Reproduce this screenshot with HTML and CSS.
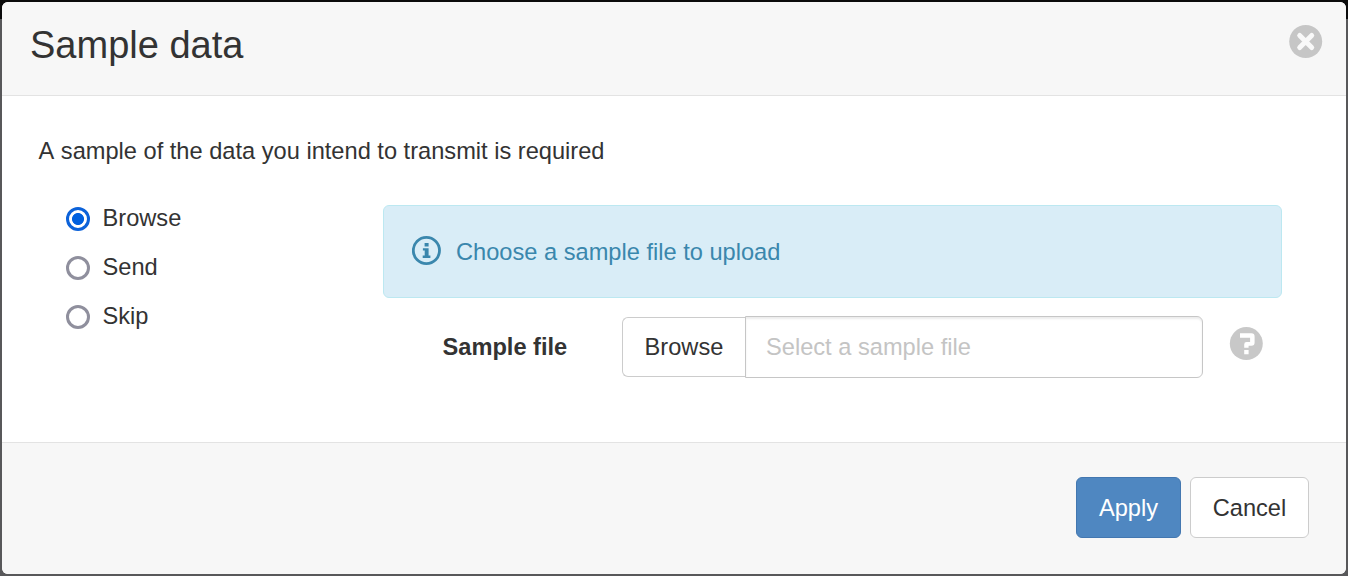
FILE: index.html
```html
<!DOCTYPE html>
<html lang="en">
<head>
<meta charset="utf-8">
<title>Sample data</title>
<link rel="stylesheet" href="styles.css">
</head>
<body>
<div class="modal">
  <header class="modal-header">
    <h1 class="title">Sample data</h1>
    <svg class="close" viewBox="0 0 34 34" role="img" aria-label="Close"><circle cx="16.7" cy="16.5" r="16.5" fill="#c6c6c6"/><path d="M10.7 10.5L22.7 22.5M22.7 10.5L10.7 22.5" stroke="#f9f9f9" stroke-width="5" stroke-linecap="round"/></svg>
  </header>
  <main class="modal-body">
    <p class="intro">A sample of the data you intend to transmit is required</p>
    <div class="columns">
      <div class="options">
        <label class="option"><input class="radio" type="radio" name="source" checked>Browse</label>
        <label class="option"><input class="radio" type="radio" name="source">Send</label>
        <label class="option"><input class="radio" type="radio" name="source">Skip</label>
      </div>
      <div class="panel">
        <div class="alert">
          <svg class="info" viewBox="0 0 30 30"><circle cx="14.4" cy="14.5" r="13.1" fill="none" stroke="#3a87ad" stroke-width="2.8"/><path fill="#3a87ad" d="M12.6 7h4v3.5h-4zM10.9 12.2h5.7v7.4h1.8v2.3h-7.7v-2.3h2v-5.1h-1.8z"/></svg>
          <span>Choose a sample file to upload</span>
        </div>
        <div class="file-row">
          <label class="file-label" for="file">Sample file</label>
          <button class="browse" type="button">Browse</button>
          <input class="file-input" id="file" type="text" placeholder="Select a sample file">
          <svg class="help" viewBox="0 0 34 34"><circle cx="17.3" cy="16.6" r="16.5" fill="#c8c8c8"/><path fill="#fff" d="M11 6.2h11.4q3.2 0 3.2 3.2v6.2q0 3.2-3.2 3.2H19.6v1.9h-4.4v-3.3q0-2.4 2.4-2.4h3.5V10.7H11zM15.2 22.9h4.4v4.3h-4.4z"/></svg>
        </div>
      </div>
    </div>
  </main>
  <footer class="modal-footer">
    <button class="btn primary" type="button">Apply</button>
    <button class="btn" type="button">Cancel</button>
  </footer>
</div>
</body>
</html>
```
FILE: styles.css
```css
* { box-sizing: border-box; }
body {
  margin: 0;
  height: 576px;
  padding: 2px;
  overflow: hidden;
  background: linear-gradient(#0b0b0b 19px, #58585a 19px);
  font-family: "Liberation Sans", Arial, sans-serif;
  font-size: 23.63px;
  line-height: 34px;
  color: #333;
}
button, input { font: inherit; color: inherit; }
.modal {
  height: 572px;
  display: flex;
  flex-direction: column;
  background: #fff;
  border-radius: 6px;
  overflow: hidden;
}
.modal-header {
  height: 94px;
  display: flex;
  justify-content: space-between;
  align-items: flex-start;
  padding: 23px 23px 0 28px;
  background: #f7f7f7;
  border-bottom: 1px solid #e3e3e3;
}
.title { margin: 0; font-size: 38px; font-weight: 400; line-height: 40px; }
.close { width: 34px; height: 34px; }
.modal-body { flex: 1; padding: 38px 64px 0 36px; }
.intro { margin: 0; padding-left: 0.5px; font-kerning: none; }
.columns { display: flex; margin-top: 37px; }
.options { width: 345px; padding-left: 28px; margin-top: -4px; }
.option { display: flex; align-items: center; height: 34px; margin-bottom: 15px; }
.radio {
  appearance: none;
  width: 24px;
  height: 24px;
  margin: 2px 12.5px 0 0;
  border: 3px solid #8f8f9d;
  border-radius: 50%;
  background: #fff;
}
.radio:checked {
  border-color: #0c62d9;
  background: radial-gradient(circle, #0060df 5.6px, #fff 6.4px);
}
.panel { width: 899px; }
.alert {
  height: 93px;
  display: flex;
  align-items: center;
  gap: 14px;
  padding-left: 28px;
  color: #3a87ad;
  background: #d9edf7;
  border: 1px solid #bce8f1;
  border-radius: 6px;
}
.info { width: 30px; height: 30px; margin-top: -2px; }
.file-row { display: flex; align-items: center; margin-top: 18px; padding-left: 59.5px; }
.file-label { width: 179.5px; font-weight: 700; }
.browse {
  width: 123px;
  height: 60px;
  padding: 0;
  background: #fff;
  border: 1px solid #ccc;
  border-right: 0;
  border-radius: 6px 0 0 6px;
}
.file-input {
  width: 458px;
  height: 62px;
  padding: 0 20px;
  background: #fff;
  border: 1px solid #c6c6c6;
  border-radius: 0 6px 6px 0;
  box-shadow: inset 0 2px 2px rgba(0, 0, 0, .075);
}
.file-input::placeholder { color: #c4c4c4; opacity: 1; }
.help { width: 34px; height: 34px; margin: -6px 0 0 26px; }
.modal-footer {
  height: 132px;
  display: flex;
  justify-content: flex-end;
  gap: 9px;
  padding: 34px 37px 0;
  background: #f7f7f7;
  border-top: 1px solid #e3e3e3;
}
.btn {
  width: 119px;
  height: 61px;
  padding: 0;
  background: #fff;
  border: 1px solid #ccc;
  border-radius: 6px;
}
.primary { width: 105px; color: #fff; background: #4f87c1; border-color: #4377b0; }
```
